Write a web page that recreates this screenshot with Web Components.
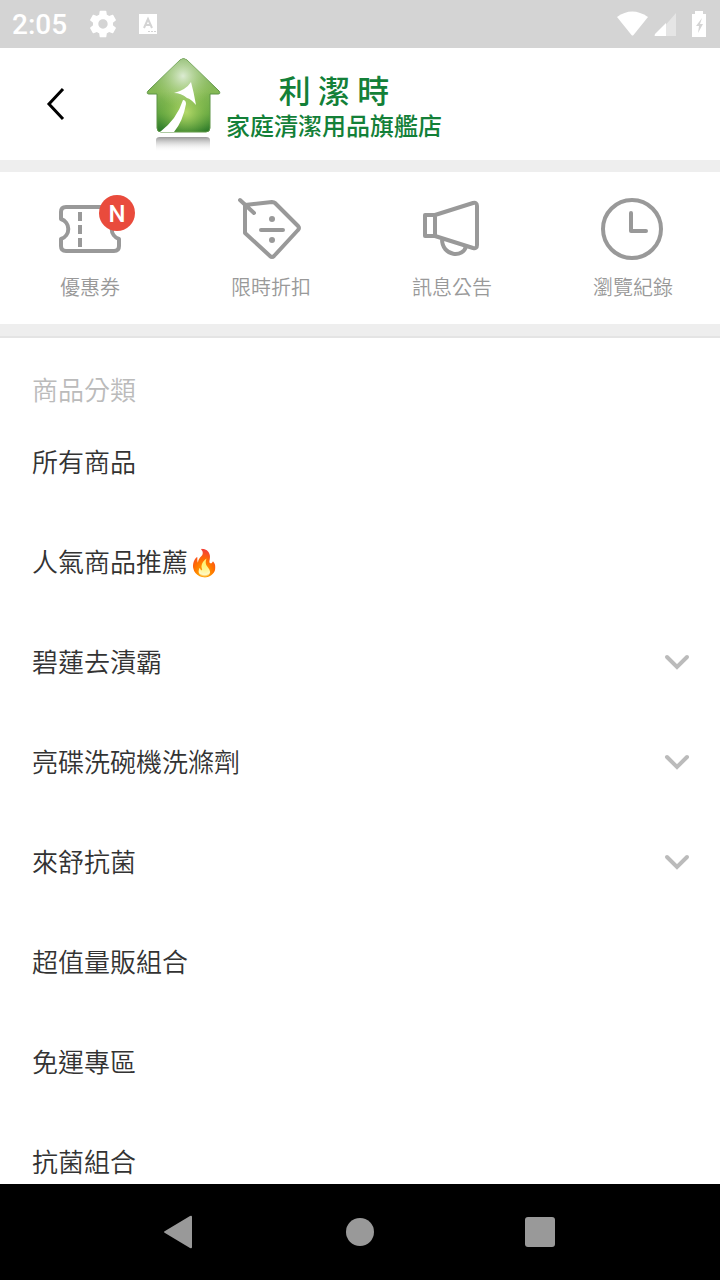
<!DOCTYPE html>
<html lang="zh-Hant">
<head>
<meta charset="utf-8">
<meta name="viewport" content="width=device-width, initial-scale=1">
<title>利潔時 家庭清潔用品旗艦店</title>
<style>
body {
  margin: 0;
  background: #fff;
  color: #333;
  font-family: Roboto, "Noto Sans CJK TC", sans-serif;
}
</style>
</head>
<body>
<shop-screen>
  <status-bar slot="status" time="2:05"></status-bar>
  <shop-header slot="header" name="利 潔 時" tagline="家庭清潔用品旗艦店"></shop-header>
  <shortcut-bar>
    <shortcut-item icon="coupon" badge="N">優惠券</shortcut-item>
    <shortcut-item icon="discount">限時折扣</shortcut-item>
    <shortcut-item icon="news">訊息公告</shortcut-item>
    <shortcut-item icon="history">瀏覽紀錄</shortcut-item>
  </shortcut-bar>
  <category-list label="商品分類">
    <category-item>所有商品</category-item>
    <category-item>人氣商品推薦🔥</category-item>
    <category-item expandable>碧蓮去漬霸</category-item>
    <category-item expandable>亮碟洗碗機洗滌劑</category-item>
    <category-item expandable>來舒抗菌</category-item>
    <category-item>超值量販組合</category-item>
    <category-item>免運專區</category-item>
    <category-item>抗菌組合</category-item>
  </category-list>
  <system-nav slot="nav"></system-nav>
</shop-screen>

<script>
function createTemplate(html) {
  const template = document.createElement("template");
  template.innerHTML = html;
  return template;
}

class BaseElement extends HTMLElement {
  constructor() {
    super();
    this.attachShadow({ mode: "open" });
    this.shadowRoot.appendChild(this.constructor.template.content.cloneNode(true));
  }
  $(selector) {
    return this.shadowRoot.querySelector(selector);
  }
}

// Whole screen: fixed bars at both ends, content scrolls in between
class ShopScreen extends BaseElement {
  static template = createTemplate(`
<style>
:host {
  display: flex;
  flex-direction: column;
  height: 100vh;
}
main {
  flex: 1;
  min-height: 0;
  overflow-y: auto;
  scrollbar-width: none;
}
</style>
<slot name="status"></slot>
<slot name="header"></slot>
<main><slot></slot></main>
<slot name="nav"></slot>`);
}
customElements.define("shop-screen", ShopScreen);

class StatusBar extends BaseElement {
  static template = createTemplate(`
<style>
:host {
  display: flex;
  align-items: center;
  justify-content: space-between;
  height: 48px;
  padding: 0 10px 0 12px;
  background: #d4d4d4;
  color: #fff;
}
div {
  display: flex;
  align-items: center;
}
.left {
  gap: 20px;
}
.right {
  gap: 4px;
}
time {
  font-size: 28px;
  font-weight: 500;
  line-height: 32px;
  padding-top: 2px;
}
svg {
  display: block;
  fill: #fff;
}
</style>
<div class="left">
  <time></time>
  <svg width="32" height="32" viewBox="0 0 24 24" aria-hidden="true"><path d="M19.43 12.98c.04-.32.07-.64.07-.98s-.03-.66-.07-.98l2.11-1.65c.19-.15.24-.42.12-.64l-2-3.46c-.12-.22-.39-.3-.61-.22l-2.49 1c-.52-.4-1.08-.73-1.69-.98l-.38-2.65C14.46 2.18 14.25 2 14 2h-4c-.25 0-.46.18-.49.42l-.38 2.65c-.61.25-1.17.59-1.69.98l-2.49-1c-.23-.09-.49 0-.61.22l-2 3.46c-.13.22-.07.49.12.64l2.11 1.65c-.04.32-.07.65-.07.98s.03.66.07.98l-2.11 1.65c-.19.15-.24.42-.12.64l2 3.46c.12.22.39.3.61.22l2.49-1c.52.4 1.08.73 1.69.98l.38 2.65c.03.24.24.42.49.42h4c.25 0 .46-.18.49-.42l.38-2.65c.61-.25 1.17-.59 1.69-.98l2.49 1c.23.09.49 0 .61-.22l2-3.46c.12-.22.07-.49-.12-.64l-2.11-1.65zM12 15.5c-1.93 0-3.5-1.57-3.5-3.5s1.57-3.5 3.5-3.5 3.5 1.57 3.5 3.5-1.57 3.500-3.500 3.500z"/></svg>
  <svg width="18" height="20" viewBox="0 0 18 20" aria-hidden="true"><path d="M0 0h18v20H0z"/><path d="M5 14l4-9 4 9M6 11h6" fill="none" stroke="#d4d4d4" stroke-width="2"/><path d="M9 17h2v1H9zM12 17h2v1h-2zM15 17h2v1h-2z" fill="#d4d4d4"/></svg>
</div>
<div class="right">
  <svg width="34" height="26" viewBox="0 0 34 26" aria-hidden="true"><path d="M1 6Q16 -5 32 6L17.500 24Q16.500 25 15.500 24z"/></svg>
  <svg width="24" height="26" viewBox="0 0 24 26" aria-hidden="true"><path d="M22 2v23H2z" opacity=".4"/><path d="M12 12v13H1q-1 0 0-2z"/></svg>
  <svg width="28" height="28" viewBox="0 0 28 28" aria-hidden="true"><path d="M13 1h8v3h3v23H10V4h3z"/><path d="M20 8l-6 8h3l-1 7 5-9h-3z" fill="#d4d4d4"/></svg>
</div>`);
  connectedCallback() {
    this.$("time").textContent = this.getAttribute("time");
  }
}
customElements.define("status-bar", StatusBar);

class ShopHeader extends BaseElement {
  static template = createTemplate(`
<style>
:host {
  display: block;
  border-bottom: 12px solid #eee;
}
header {
  display: flex;
  align-items: center;
  height: 112px;
}
button {
  width: 112px;
  height: 112px;
  padding: 0;
  border: 0;
  background: none;
}
svg {
  display: block;
}
button svg {
  margin: auto;
}
a {
  display: flex;
  align-items: center;
  margin-left: 32px;
  color: #138038;
  text-align: center;
  text-decoration: none;
}
h1, p {
  margin: 0;
  font-weight: 500;
}
h1 {
  font-family: "Noto Sans CJK TC", sans-serif;
  font-size: 32px;
  line-height: 36px;
}
p {
  font-size: 24px;
  line-height: 40px;
}
.name {
  padding: 10px 2px 0;
}
</style>
<header>
  <button type="button" aria-label="返回"><svg width="32" height="40" viewBox="0 0 32 40"><path d="M23 5L9 20l14 15" fill="none" stroke="#000" stroke-width="3"/></svg></button>
  <a href="#">
    <svg width="80" height="100" viewBox="144 54 80 100" aria-hidden="true">
      <defs>
        <linearGradient id="wall" x1="0" y1="0" x2="0" y2="1">
          <stop offset="0" stop-color="#7fae6c"/>
          <stop offset=".45" stop-color="#86b956"/>
          <stop offset=".75" stop-color="#62a540"/>
          <stop offset="1" stop-color="#2a7829"/>
        </linearGradient>
        <radialGradient id="shine" gradientUnits="userSpaceOnUse" cx="183" cy="76" r="32">
          <stop offset="0" stop-color="#dcebd3"/>
          <stop offset="1" stop-color="#a9d272" stop-opacity="0"/>
        </radialGradient>
        <radialGradient id="glow" gradientUnits="userSpaceOnUse" cx="186" cy="112" r="28">
          <stop offset="0" stop-color="#b4d86a"/>
          <stop offset="1" stop-color="#8fc34c" stop-opacity="0"/>
        </radialGradient>
        <linearGradient id="mirror" x1="0" y1="0" x2="0" y2="1">
          <stop offset="0" stop-color="#999"/>
          <stop offset="1" stop-color="#fff" stop-opacity="0"/>
        </linearGradient>
        <path id="house" d="M180 60q3.500-3 7 0l32 31q2 3-1 3h-8v34q0 4-4 4h-45q-4 0-4-4V94h-8q-3 0-1-3z"/>
      </defs>
      <use href="#house" fill="url(#wall)" stroke="#5c9444" stroke-width="1"/>
      <use href="#house" fill="url(#glow)"/>
      <use href="#house" fill="url(#shine)"/>
      <path d="M174 93Q186 90 191 82 194 93 196 105 191 99 187 98 181 93 174 93zM183 100q3 0 3 4-3 17-12 28H160q17-13 23-32z" fill="#fff"/>
      <path d="M156 140q0-3 4-3h46q4 0 4 3v12h-54z" fill="url(#mirror)"/>
    </svg>
    <div class="name">
      <h1></h1>
      <p></p>
    </div>
  </a>
</header>`);
  connectedCallback() {
    this.$("h1").textContent = this.getAttribute("name");
    this.$("p").textContent = this.getAttribute("tagline");
  }
}
customElements.define("shop-header", ShopHeader);

class ShortcutBar extends BaseElement {
  static template = createTemplate(`
<style>
:host {
  display: block;
  border-bottom: 2px solid #e4e4e4;
}
nav {
  display: flex;
  gap: 1px;
  overflow: hidden;
  height: 152px;
  border-bottom: 12px solid #eee;
}
::slotted(*) {
  flex: 0 0 25%;
}
</style>
<nav aria-label="捷徑"><slot></slot></nav>`);
}
customElements.define("shortcut-bar", ShortcutBar);

const shortcutIcons = {
  coupon: `<path d="M10 11h48q5 0 5 5v7a10.500 10.500 0 0 0 0 20v7q0 5-5 5H10q-5 0-5-5v-7a10.500 10.500 0 0 0 0-20v-7q0-5 5-5z"/><path d="M24 16v35" stroke-dasharray="9 4"/>`,
  discount: `<path d="M8 9l27-3q2 0 3 1l23 23q2 2 0 4L37 60q-2 2-4 0L8 37zM3 4l14 13M24 34h22"/><circle class="dot" cx="35" cy="23" r="3"/><circle class="dot" cx="35" cy="44" r="3"/>`,
  news: `<path d="M7 19h10v21H7zM17 19l38-12q4-1 4 3v39q0 4-4 3L17 40M24 43c0 18 22 19 24 7"/>`,
  history: `<circle cx="33" cy="33" r="29"/><path d="M32 17v18h15"/>`
};

class ShortcutItem extends BaseElement {
  static template = createTemplate(`
<style>
:host {
  display: block;
}
a {
  display: flex;
  flex-direction: column;
  align-items: center;
  padding-top: 24px;
  color: #999;
  font-size: 20px;
  font-weight: 350;
  line-height: 32px;
  text-decoration: none;
}
.icon {
  position: relative;
  width: 68px;
  height: 76px;
}
svg {
  display: block;
  fill: none;
  stroke: #999;
  stroke-width: 4;
  stroke-linecap: round;
  stroke-linejoin: round;
}
svg [stroke-dasharray] {
  stroke-linecap: butt;
}
.dot {
  fill: #999;
  stroke: none;
}
.badge {
  position: absolute;
  top: -1px;
  right: -11px;
  width: 36px;
  height: 36px;
  border-radius: 50%;
  background: #e94b3c;
  color: #fff;
  font-size: 24px;
  font-weight: 500;
  line-height: 38px;
  text-align: center;
}
.badge:empty {
  display: none;
}
</style>
<a href="#">
  <span class="icon">
    <svg width="68" height="68" viewBox="0 0 68 68" aria-hidden="true"></svg>
    <span class="badge"></span>
  </span>
  <slot></slot>
</a>`);
  connectedCallback() {
    this.$("svg").innerHTML = shortcutIcons[this.getAttribute("icon")];
    this.$(".badge").textContent = this.getAttribute("badge") || "";
  }
}
customElements.define("shortcut-item", ShortcutItem);

class CategoryList extends BaseElement {
  static template = createTemplate(`
<style>
:host {
  display: block;
  padding-top: 32px;
}
h2 {
  margin: 0;
  padding: 0 32px;
  color: #bbb;
  font-size: 26px;
  font-weight: 350;
  line-height: 42px;
}
</style>
<section>
  <h2></h2>
  <slot></slot>
</section>`);
  connectedCallback() {
    this.$("h2").textContent = this.getAttribute("label");
  }
}
customElements.define("category-list", CategoryList);

class CategoryItem extends BaseElement {
  static template = createTemplate(`
<style>
:host {
  display: block;
}
button {
  display: flex;
  align-items: center;
  justify-content: space-between;
  width: 100%;
  height: 100px;
  padding: 0 28px 0 32px;
  border: 0;
  background: none;
  color: #333;
  font: inherit;
  font-size: 26px;
  font-weight: 350;
  line-height: 40px;
  text-align: left;
}
span {
  padding-top: 2px;
}
svg {
  display: none;
  fill: none;
  stroke: #bbb;
  stroke-width: 4;
}
:host([expandable]) svg {
  display: block;
}
</style>
<button type="button">
  <span><slot></slot></span>
  <svg width="30" height="20" viewBox="0 0 30 20" aria-hidden="true"><path d="M5 5l10 10L25 5" stroke-linecap="round"/></svg>
</button>`);
}
customElements.define("category-item", CategoryItem);

class SystemNav extends BaseElement {
  static template = createTemplate(`
<style>
:host {
  display: block;
  background: #000;
}
nav {
  display: flex;
  justify-content: center;
  height: 96px;
}
button {
  flex: 0 0 25%;
  padding: 0;
  border: 0;
  background: none;
}
svg {
  display: block;
  margin: auto;
  fill: #999;
}
</style>
<nav>
  <button type="button" aria-label="返回"><svg width="36" height="36" viewBox="0 0 36 36"><path d="M28 2q2-1 2 1v30q0 2-2 1L3 19q-2-1 0-2z"/></svg></button>
  <button type="button" aria-label="主畫面"><svg width="36" height="36" viewBox="0 0 36 36"><circle cx="18" cy="18" r="14"/></svg></button>
  <button type="button" aria-label="最近使用"><svg width="36" height="36" viewBox="0 0 36 36"><rect x="3" y="3" width="30" height="30" rx="3"/></svg></button>
</nav>`);
}
customElements.define("system-nav", SystemNav);
</script>
</body>
</html>
